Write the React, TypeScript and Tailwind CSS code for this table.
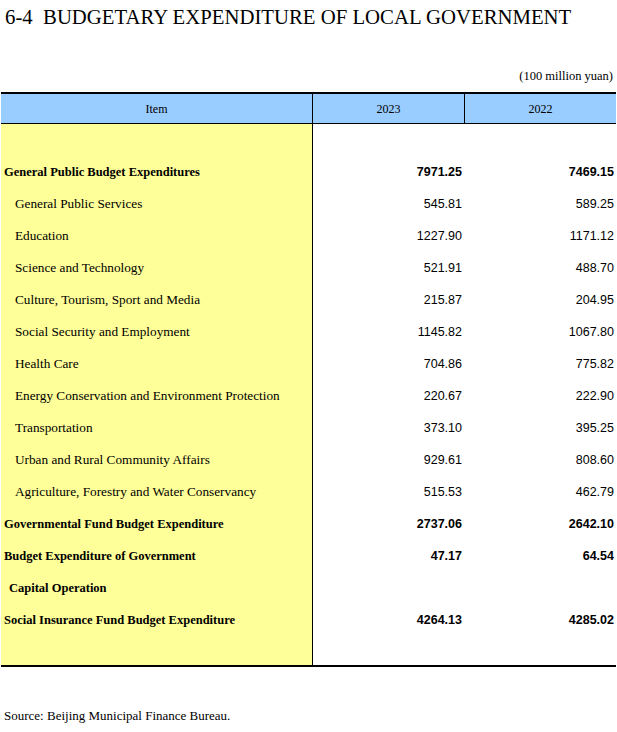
import React from "react";

type Row = {
  label: string;
  y2023?: string;
  y2022?: string;
  bold?: boolean;
  indent?: "sub" | "cont";
};

const rows: Row[] = [
  { label: "General Public Budget Expenditures", y2023: "7971.25", y2022: "7469.15", bold: true },
  { label: "General Public Services", y2023: "545.81", y2022: "589.25", indent: "sub" },
  { label: "Education", y2023: "1227.90", y2022: "1171.12", indent: "sub" },
  { label: "Science and Technology", y2023: "521.91", y2022: "488.70", indent: "sub" },
  { label: "Culture, Tourism, Sport and Media", y2023: "215.87", y2022: "204.95", indent: "sub" },
  { label: "Social Security and Employment", y2023: "1145.82", y2022: "1067.80", indent: "sub" },
  { label: "Health Care", y2023: "704.86", y2022: "775.82", indent: "sub" },
  { label: "Energy Conservation and Environment Protection", y2023: "220.67", y2022: "222.90", indent: "sub" },
  { label: "Transportation", y2023: "373.10", y2022: "395.25", indent: "sub" },
  { label: "Urban and Rural Community Affairs", y2023: "929.61", y2022: "808.60", indent: "sub" },
  { label: "Agriculture, Forestry and Water Conservancy", y2023: "515.53", y2022: "462.79", indent: "sub" },
  { label: "Governmental Fund Budget Expenditure", y2023: "2737.06", y2022: "2642.10", bold: true },
  { label: "Budget Expenditure of Government", y2023: "47.17", y2022: "64.54", bold: true },
  { label: "Capital Operation", bold: true, indent: "cont" },
  { label: "Social Insurance Fund Budget Expenditure", y2023: "4264.13", y2022: "4285.02", bold: true },
];

export default function App() {
  return (
    <div className="relative h-[732px] w-[617px] overflow-hidden bg-white font-['Liberation_Serif','Times_New_Roman',serif] text-black">
      {/* title */}
      <div className="h-[60px] pl-[5px] pt-[5px] text-[20.75px] leading-[24px] whitespace-pre">
        6-4  BUDGETARY EXPENDITURE OF LOCAL GOVERNMENT
      </div>
      <div className="flex h-[32px] items-center justify-end pr-[4px] text-[12.5px]">
        (100 million yuan)
      </div>

      {/* table */}
      <div className="ml-px w-[615px] border-t-2 border-b-2 border-black">
        <div className="grid h-[30px] grid-cols-[312px_152px_151px] border-b border-black bg-[#99ccff] text-[12px]">
          <div className="flex items-center justify-center border-r border-black">Item</div>
          <div className="flex items-center justify-center border-r border-black">2023</div>
          <div className="flex items-center justify-center">2022</div>
        </div>

        <div className="grid grid-cols-[312px_303px]">
          <div className="border-r border-black bg-[#ffff99] pt-[32px] pb-[29px]">
            {rows.map((r) => (
              <div
                key={r.label}
                className={`flex h-[32px] items-center ${r.bold ? "text-[12.5px] font-bold" : "text-[13.25px]"} ${
                  r.indent === "sub" ? "pl-[14px]" : r.indent === "cont" ? "pl-[8px]" : "pl-[3px]"
                }`}
              >
                {r.label}
              </div>
            ))}
          </div>
          <div className="pt-[32px] pb-[29px] font-['Liberation_Sans',Arial,sans-serif] text-[12.5px]">
            {rows.map((r) => (
              <div
                key={r.label}
                className={`grid h-[32px] grid-cols-[149px_152px] items-center ${r.bold ? "font-bold" : ""}`}
              >
                <div className="text-right">{r.y2023}</div>
                <div className="text-right">{r.y2022}</div>
              </div>
            ))}
          </div>
        </div>
      </div>

      <div className="mt-[41px] pl-[4px] text-[13px] leading-[16px]">
        Source: Beijing Municipal Finance Bureau.
      </div>
    </div>
  );
}
